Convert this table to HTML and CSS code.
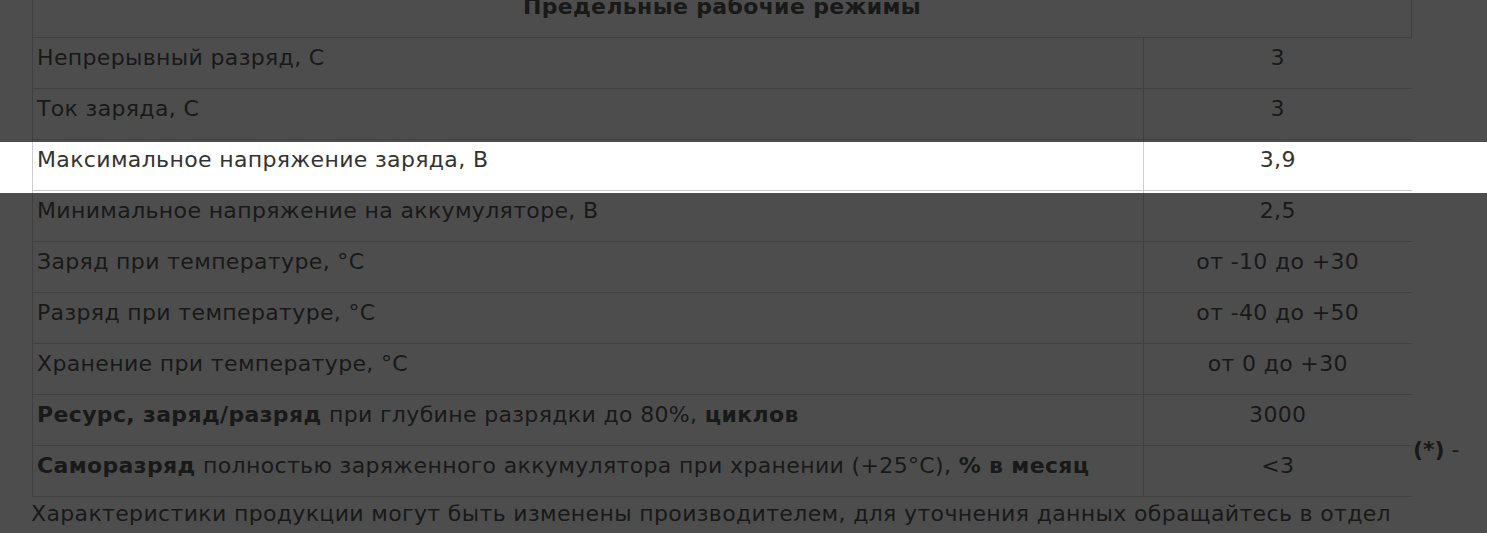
FILE: index.html
```html
<!DOCTYPE html>
<html>
<head>
	<meta charset="UTF-8">
	<title>Предельные рабочие режимы</title>
	<link rel="stylesheet" href="styles.css">
</head>
<body>
	<section class="page">
		<div class="layout">
			<table class="specs">
				<tr>
					<th colspan="2" class="specs_head">Предельные рабочие режимы</th>
				</tr>
				<tr>
					<td class="name">Непрерывный разряд, С</td>
					<td class="value">3</td>
				</tr>
				<tr>
					<td class="name">Ток заряда, С</td>
					<td class="value">3</td>
				</tr>
				<tr>
					<td class="name">Максимальное напряжение заряда, В</td>
					<td class="value">3,9</td>
				</tr>
				<tr>
					<td class="name">Минимальное напряжение на аккумуляторе, В</td>
					<td class="value">2,5</td>
				</tr>
				<tr>
					<td class="name">Заряд при температуре, °С</td>
					<td class="value">от -10 до +30</td>
				</tr>
				<tr>
					<td class="name">Разряд при температуре, °С</td>
					<td class="value">от -40 до +50</td>
				</tr>
				<tr>
					<td class="name">Хранение при температуре, °С</td>
					<td class="value">от 0 до +30</td>
				</tr>
				<tr>
					<td class="name"><b>Ресурс, заряд/разряд</b> при глубине разрядки до 80%, <b>циклов</b></td>
					<td class="value">3000</td>
				</tr>
				<tr>
					<td class="name"><b>Саморазряд</b> полностью заряженного аккумулятора при хранении (+25°C), <b>% в месяц</b></td>
					<td class="value">&lt;3</td>
				</tr>
			</table>
			<p class="note"><b>(*)</b> -</p>
		</div>
		<p class="footer_text">Характеристики продукции могут быть изменены производителем, для уточнения данных обращайтесь в отдел продаж.</p>
	</section>

	<!-- tour overlay with a hole over the highlighted row -->
	<div class="overlay overlay_top"></div>
	<div class="overlay overlay_bottom"></div>
</body>
</html>
```

FILE: styles.css
```css
html, body {
	margin: 0;
	padding: 0;
	background: #fff;
	overflow: hidden;
}
body {
	font-family: "DejaVu Sans", "Liberation Sans", Arial, sans-serif;
	font-size: 22px;
	line-height: 25px;
	letter-spacing: 0.35px;
	color: #333;
}
.page {
	margin-top: -14px;
	padding-left: 32px;
}
.layout {
	display: flex;
	align-items: flex-end;
}
.specs {
	width: 1380px;
	border-collapse: collapse;
	flex: none;
}
.specs th,
.specs td {
	border: 1px solid #ccc;
	padding: 7px 4px 18px;
	vertical-align: top;
}
.specs_head {
	font-weight: bold;
	text-align: center;
}
.name {
	width: 1102px;
	text-align: left;
	border-left: 1px solid #ccc;
}
.specs td.value {
	text-align: center;
	border-right: none;
}
.note {
	margin: 0 0 35px 1px;
	white-space: nowrap;
	letter-spacing: 0;
}
.footer_text {
	margin: 4px 0 0 -1px;
	width: 1381px;
}
.overlay {
	position: fixed;
	left: 0;
	right: 0;
	background: rgba(18, 18, 18, 0.75);
}
.overlay_top {
	top: 0;
	height: 142px;
}
.overlay_bottom {
	top: 193px;
	bottom: 0;
}
```
